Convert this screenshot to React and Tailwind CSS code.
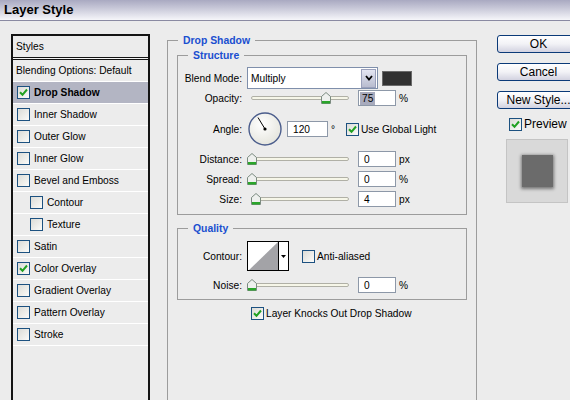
import { useState } from "react";

const LEFT_ITEMS = [
  { label: "Blending Options: Default", box: false },
  { label: "Drop Shadow", checked: true, active: true },
  { label: "Inner Shadow" },
  { label: "Outer Glow" },
  { label: "Inner Glow" },
  { label: "Bevel and Emboss" },
  { label: "Contour", indent: true },
  { label: "Texture", indent: true },
  { label: "Satin" },
  { label: "Color Overlay", checked: true },
  { label: "Gradient Overlay" },
  { label: "Pattern Overlay" },
  { label: "Stroke" },
];

function Check({ checked }) {
  return (
    <span className="flex h-[13px] w-[13px] shrink-0 items-center justify-center border border-[#1c5180] bg-linear-to-br from-[#dcdcd7] to-[#fbfbf9]">
      {checked && (
        <svg width="9" height="9" viewBox="0 0 9 9">
          <path d="M1 4.2 L3.5 6.8 L8 1.5" fill="none" stroke="#21a121" strokeWidth="2" />
        </svg>
      )}
    </span>
  );
}

function Thumb() {
  return (
    <svg width="10" height="12" viewBox="0 0 10 12">
      <path d="M0.5 4.5 L5 0.5 L9.5 4.5 V11.5 H0.5 Z" fill="#eef0ee" stroke="#7b8b80" />
      <rect x="1" y="9" width="8" height="2.5" fill="#2aa52a" />
    </svg>
  );
}

function Slider({ pos }) {
  return (
    <div className="relative ml-[9px] flex h-[14px] w-[98px] shrink-0 items-center">
      <div className="h-[4px] w-full rounded-full border border-[#b0b0a6] bg-[#f6f6e8]" />
      <div className="absolute top-[1px]" style={{ left: pos - 5 }}>
        <Thumb />
      </div>
    </div>
  );
}

function NumBox({ children, w = "w-[38px]", pad = "pl-[5px]" }) {
  return (
    <div className={`flex h-[16px] ${w} shrink-0 items-center border border-[#8d98a8] bg-white ${pad}`}>
      {children}
    </div>
  );
}

function Label({ children }) {
  return <span className="w-[64px] shrink-0 text-right">{children}</span>;
}

function SliderRow({ label, pos, value, unit, mt }) {
  return (
    <div className={`flex h-[16px] items-center ${mt}`}>
      <Label>{label}</Label>
      <Slider pos={pos} />
      <div className="ml-[9px]">
        <NumBox>{value}</NumBox>
      </div>
      <span className="ml-[3px]">{unit}</span>
    </div>
  );
}

function Legend({ children }) {
  return (
    <legend className="ml-[10px] px-[5px] text-[10.4px] font-bold leading-[13px] text-[#1a4fd0]">
      {children}
    </legend>
  );
}

function Button({ children, mt }) {
  return (
    <div
      className={`flex h-[18px] w-[83px] shrink-0 items-center justify-center rounded-[3px] border border-[#0b3a78] bg-linear-to-b from-white via-[#f2f2f6] to-[#d2d2e0] text-[12px] ${mt}`}
    >
      {children}
    </div>
  );
}

export default function App() {
  const [active] = useState("Drop Shadow");

  return (
    <div className="h-[400px] w-[570px] overflow-hidden bg-[#ececec] font-['Liberation_Sans',Arial,sans-serif] text-[10.2px] leading-[13px] text-black">
      {/* Title bar */}
      <div className="flex h-[21px] items-center border-b border-[#8a8aa2] bg-linear-to-b from-[#a9a9c1] to-[#f6f6fa] pl-[4px]">
        <span className="pb-[2px] text-[13px] font-bold">Layer Style</span>
      </div>

      <div className="flex">
        {/* Styles list */}
        <div className="ml-[11px] mt-[13px] h-[380px] w-[139px] shrink-0 border-2 border-b-0 border-[#141414]">
          <div className="flex h-[21px] items-center pl-[3px]">Styles</div>
          <div className="h-[3px] border-y border-[#141414] bg-[#f4f4f4]" />
          {LEFT_ITEMS.map((it) => (
            <div
              key={it.label}
              className={`flex h-[22px] items-center gap-[4px] border-b border-white ${
                it.label === active ? "bg-[#b3b5c3] font-bold" : ""
              } ${it.box === false ? "pl-[3px]" : it.indent ? "pl-[17px]" : "pl-[4px]"}`}
            >
              {it.box !== false && <Check checked={it.checked} />}
              <span>{it.label}</span>
            </div>
          ))}
        </div>

        {/* Drop Shadow settings */}
        <div className="ml-[17px] shrink-0 pt-[13px]">
          <fieldset className="h-[380px] w-[310px] border border-[#9c9c9c]">
            <Legend>Drop Shadow</Legend>
            <div className="px-[9px]">
              <fieldset className="mt-[2px] border border-[#9c9c9c] pb-[7px]">
                <Legend>Structure</Legend>
                <div className="mt-[5px] flex h-[22px] items-center">
                  <Label>Blend Mode:</Label>
                  <div className="ml-[5px] flex h-[22px] w-[131px] shrink-0 items-center border border-[#7f8fab] bg-white pl-[3px]">
                    <span className="flex-1">Multiply</span>
                    <div className="mr-[1px] flex h-[19px] w-[15px] items-center justify-center border border-[#9aa0bb] bg-linear-to-b from-[#e4e6f2] to-[#b8bccf]">
                      <svg width="8" height="6" viewBox="0 0 8 6">
                        <path d="M1 1 L4 4.5 L7 1" fill="none" stroke="#000" strokeWidth="1.8" />
                      </svg>
                    </div>
                  </div>
                  <div className="ml-[4px] h-[15px] w-[30px] border border-[#6a6a6a] bg-[#313131]" />
                </div>

                <div className="mt-[1px] flex h-[16px] items-center">
                  <Label>Opacity:</Label>
                  <Slider pos={75} />
                  <div className="ml-[9px]">
                    <NumBox pad="pl-[1px]">
                      <span className="bg-[#a8abbd] px-[2px]">75</span>
                    </NumBox>
                  </div>
                  <span className="ml-[3px]">%</span>
                </div>

                <div className="mt-[6px] flex h-[34px] items-center">
                  <Label>Angle:</Label>
                  <svg className="ml-[6px] shrink-0" width="34" height="34" viewBox="0 0 34 34">
                    <defs>
                      <radialGradient id="dial" cx="40%" cy="35%" r="70%">
                        <stop offset="0" stopColor="#ffffff" />
                        <stop offset="1" stopColor="#e4e4dc" />
                      </radialGradient>
                    </defs>
                    <circle cx="17" cy="17" r="16" fill="url(#dial)" stroke="#4b5d8c" strokeWidth="1.4" />
                    <line x1="17" y1="17" x2="10" y2="5.5" stroke="#000" strokeWidth="1" />
                    <circle cx="17" cy="17" r="1.6" fill="#000" />
                  </svg>
                  <div className="ml-[5px]">
                    <NumBox w="w-[41px]">120</NumBox>
                  </div>
                  <span className="ml-[3px] w-[15px] shrink-0">°</span>
                  <Check checked />
                  <span className="ml-[2px] whitespace-nowrap">Use Global Light</span>
                </div>

                <SliderRow label="Distance:" pos={1} value="0" unit="px" mt="mt-[5px]" />
                <SliderRow label="Spread:" pos={1} value="0" unit="%" mt="mt-[4px]" />
                <SliderRow label="Size:" pos={5} value="4" unit="px" mt="mt-[4px]" />
              </fieldset>

              <fieldset className="mt-[7px] border border-[#9c9c9c] pb-[6px]">
                <Legend>Quality</Legend>
                <div className="mt-[6px] flex h-[30px] items-center">
                  <Label>Contour:</Label>
                  <div className="ml-[5px] flex h-[30px] w-[42px] shrink-0 border border-black bg-white">
                    <svg width="30" height="28" viewBox="0 0 30 28">
                      <polygon points="1,28 30,0 30,28" fill="#a3a3a7" />
                    </svg>
                    <div className="flex flex-1 items-center justify-center border-l border-black">
                      <svg width="5" height="3" viewBox="0 0 5 3">
                        <polygon points="0,0 5,0 2.5,3" fill="#000" />
                      </svg>
                    </div>
                  </div>
                  <span className="ml-[13px]">
                    <Check />
                  </span>
                  <span className="ml-[2px]">Anti-aliased</span>
                </div>
                <SliderRow label="Noise:" pos={1} value="0" unit="%" mt="mt-[6px]" />
              </fieldset>

              <div className="ml-[74px] mt-[6px] flex h-[14px] items-center gap-[2px]">
                <Check checked />
                <span>Layer Knocks Out Drop Shadow</span>
              </div>
            </div>
          </fieldset>
        </div>

        {/* Buttons and preview */}
        <div className="ml-[20px] flex shrink-0 flex-col pt-[14px]">
          <Button>OK</Button>
          <Button mt="mt-[10px]">Cancel</Button>
          <Button mt="mt-[10px]">New Style...</Button>
          <div className="ml-[12px] mt-[9px] flex h-[13px] items-center gap-[2px] text-[12px]">
            <Check checked />
            <span>Preview</span>
          </div>
          <div className="ml-[9px] mt-[8px] flex h-[64px] w-[62px] items-center justify-center border border-[#c4c4c4] bg-[#d9d9d9]">
            <div className="h-[32px] w-[31px] bg-[#6b6b6b] shadow-[0_1px_3px_1px_rgba(0,0,0,0.45)]" />
          </div>
        </div>
      </div>
    </div>
  );
}
